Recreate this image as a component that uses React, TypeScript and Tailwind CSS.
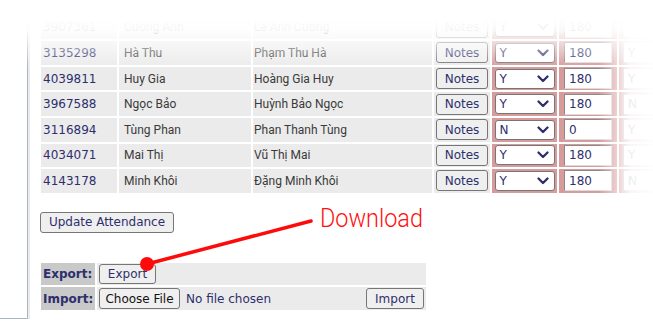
import React from "react";

interface Row {
  id: string;
  first: string;
  full: string;
  att: string;
  mins: string;
  extra: string;
}

const ROWS: Row[] = [
  { id: "3907361", first: "Cường Anh", full: "Lê Anh Cường", att: "Y", mins: "180", extra: "Y" },
  { id: "3135298", first: "Hà Thu", full: "Phạm Thu Hà", att: "Y", mins: "180", extra: "Y" },
  { id: "4039811", first: "Huy Gia", full: "Hoàng Gia Huy", att: "Y", mins: "180", extra: "Y" },
  { id: "3967588", first: "Ngọc Bảo", full: "Huỳnh Bảo Ngọc", att: "Y", mins: "180", extra: "N" },
  { id: "3116894", first: "Tùng Phan", full: "Phan Thanh Tùng", att: "N", mins: "0", extra: "Y" },
  { id: "4034071", first: "Mai Thị", full: "Vũ Thị Mai", att: "Y", mins: "180", extra: "Y" },
  { id: "4143178", first: "Minh Khôi", full: "Đặng Minh Khôi", att: "Y", mins: "180", extra: "N" },
];

const sys = "font-['DejaVu_Sans',sans-serif] text-[12px] text-[#2d2f6c]";
const btn = "bg-[#efefef] border border-[#767676] rounded-[3px] leading-none flex items-center justify-center";

function Chevron() {
  return (
    <svg width="12" height="8" viewBox="0 0 12 8" className="shrink-0">
      <path d="M1.5 1.5 L6 6 L10.5 1.5" stroke="#2d2f6c" strokeWidth="2.3" fill="none" strokeLinecap="round" strokeLinejoin="round" />
    </svg>
  );
}

export default function App() {
  return (
    <div className="relative w-[653px] h-[321px] overflow-hidden bg-white flex">
      {/* left panel */}
      <div className="w-[28px] h-[319px] shrink-0 border-r border-b border-[#a9b5c4] shadow-[2px_0_0_#ececec]" />

      <div className="ml-[13px] flex flex-col">
        {/* attendance table */}
        <div className="mt-[15.6px] grid grid-cols-[76px_132px_179px_56px_65px_58px_60px] auto-rows-[23.6px] gap-[2px]">
          {ROWS.map(r => (
            <React.Fragment key={r.id}>
              <div className={`bg-[#ebebeb] pl-[2px] flex items-center ${sys}`}>{r.id}</div>
              <div className="bg-[#ebebeb] pl-[5px] flex items-center font-['Roboto',sans-serif] text-[12px] text-[#3a3a3a]">{r.first}</div>
              <div className="bg-[#ebebeb] pl-[1px] flex items-center font-['Roboto',sans-serif] text-[12px] text-[#3a3a3a]">{r.full}</div>
              <div className="bg-[#ebebeb] flex items-center justify-center">
                <div className={`${btn} ${sys} w-[52px] h-[21px]`}>Notes</div>
              </div>
              <div className="bg-[#d79b9c] flex items-center justify-center">
                <div className={`w-[60px] h-[20px] bg-white border border-[#767676] rounded-[3px] flex items-center justify-between pl-[4px] pr-[5px] ${sys}`}>
                  <span>{r.att}</span>
                  <Chevron />
                </div>
              </div>
              <div className="bg-[#d79b9c] flex items-center pl-[5px]">
                <div className={`w-[48px] h-[21px] bg-white border-t border-l border-[#8a8a8a] border-r-[#dcdcdc] border-b-[#dcdcdc] border-r border-b flex items-center pl-[4px] ${sys}`}>{r.mins}</div>
              </div>
              <div className="bg-[#d79b9c] flex items-center pl-[4px]">
                <div className={`w-[48px] h-[21px] bg-white border border-[#bbbbbb] flex items-center pl-[4px] ${sys}`}>{r.extra}</div>
              </div>
            </React.Fragment>
          ))}
        </div>

        <div className={`${btn} ${sys} mt-[19.2px] -ml-[1px] w-[134px] h-[21px]`}>Update Attendance</div>

        {/* export / import */}
        <div className="mt-[30px] grid grid-cols-[54px_329px] auto-rows-[22.5px] gap-[2px]">
          <div className={`bg-[#c9c9c9] pl-[2px] flex items-center font-bold ${sys}`}>Export:</div>
          <div className="bg-[#ebebeb] flex items-center pl-[2px]">
            <div className={`${btn} ${sys} w-[57px] h-[20px]`}>Export</div>
          </div>
          <div className={`bg-[#c9c9c9] pl-[2px] flex items-center font-bold ${sys}`}>Import:</div>
          <div className="bg-[#ebebeb] flex items-center pl-[2px] pr-[2px]">
            <div className={`${btn} ${sys} w-[81px] h-[21px] text-[#111]`}>Choose File</div>
            <span className={`ml-[6px] ${sys}`}>No file chosen</span>
            <div className={`${btn} ${sys} ml-auto w-[58px] h-[21px]`}>Import</div>
          </div>
        </div>
      </div>

      {/* fades */}
      <div className="absolute inset-x-0 top-0 h-[70px] pointer-events-none bg-[linear-gradient(to_bottom,#fff_0px,#fff_18px,rgba(255,255,255,0.94)_30px,rgba(255,255,255,0.4)_52px,rgba(255,255,255,0)_68px)]" />
      <div className="absolute inset-y-0 right-0 w-[55px] pointer-events-none bg-[linear-gradient(to_right,rgba(255,255,255,0)_0px,rgba(255,255,255,0.5)_18px,rgba(255,255,255,0.9)_32px,rgba(255,255,255,0.98)_55px)]" />

      {/* annotation */}
      <svg className="absolute inset-0 pointer-events-none" width="653" height="321">
        <line x1="147" y1="264" x2="311" y2="221" stroke="#ff0a0a" strokeWidth="3.5" strokeLinecap="round" />
        <circle cx="147" cy="264" r="7" fill="#ff0a0a" />
      </svg>
      <div className="absolute left-[320px] top-[205px] font-['Roboto',sans-serif] font-light text-[26px] leading-none text-[#ff1010] origin-left scale-x-90">Download</div>
    </div>
  );
}
